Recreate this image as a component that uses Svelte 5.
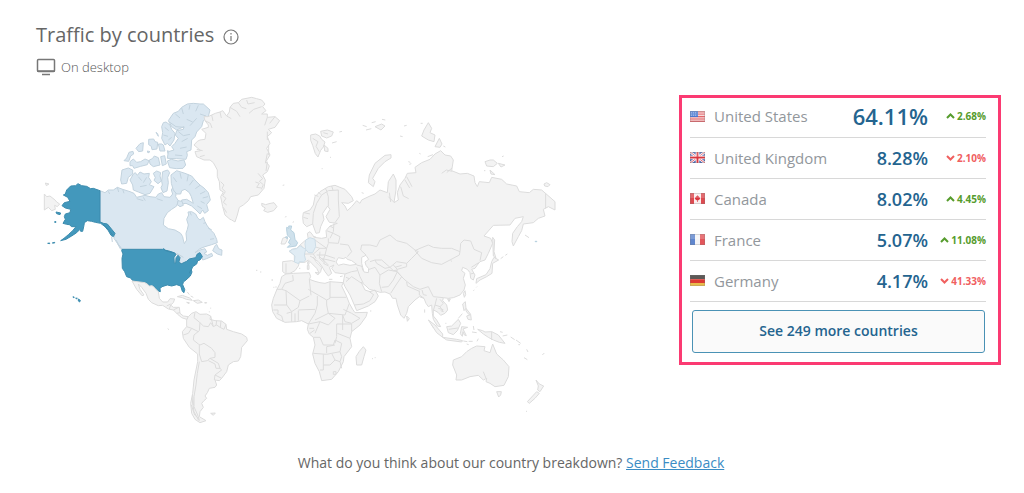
<script>
  const rows = [
    { code: 'us', name: 'United States', share: '64.11%', change: '2.68%', up: true },
    { code: 'gb', name: 'United Kingdom', share: '8.28%', change: '2.10%', up: false },
    { code: 'ca', name: 'Canada', share: '8.02%', change: '4.45%', up: true },
    { code: 'fr', name: 'France', share: '5.07%', change: '11.08%', up: true },
    { code: 'de', name: 'Germany', share: '4.17%', change: '41.33%', up: false }
  ];

  // Each region is drawn at three times the map's scale from its own origin.
  const regions = [
    { x: 30, y: 90, tone: 'light', shapes: [
      'M276 240L295 234 308 240 308 252 295 262 290 280 275 282 272 270Z',
      'M310 252L316 248 322 256 330 246 342 252 358 250 356 262 364 275 358 284 372 290 360 310 345 314 325 306 310 300 308 285 300 270Z',
      'M370 250l10-7 12 5-2 10 4 15-10 8-12-10 4-8zM398 245l15-5 6 8-6 14 2 16-4 25-12 5-6-15 4-8-2-12z',
      'M318 175l12-14 10-3-2 25-12 2z',
      'M282 212l8-8 7-17 12-3 2 8-9 6-6 16z',
      'M300 215l10-8 10 10 12-2 13-8 12 5-5 12-20 5-20 6-4-8-8 0z',
      'M356 148l15-1 4 8 8 2-2 20-15 2-2-10-8-5z M385 162l10 0 5 3 5 18-15 0z M378 127l5 4 2 8z M352 183l8 2-6 4z M412 182l10 4-8 5z',
      'M358 210l9-4 6-8 12 5 5 22-20 5-10-8z M392 200l12-3 5 25-12 5z',
      'M412 213l12-5 20 5 18-3 5 15-8 10-20 1-20-3z',
      'M395 110L400 98 408 96 420 105 425 118 435 130 432 150 420 168 412 160 405 165 395 145 398 128Z',
      'M415 92L430 70 445 64 455 52 472 42 490 40 510 42 520 42 540 60 535 80 520 92 515 110 500 126 495 140 485 150 483 180 470 185 472 196 468 208 440 206 412 205 415 185 432 180 425 170 435 160 445 145 436 135 440 122 460 118 462 110 440 120 425 110Z'
    ], lines: ['M436 72l14 12M455 54l5 18M480 45l-3 14M505 46l-8 18M470 88l18 8M500 85l-20 22M528 78l-18-6M418 96l20 14 25 2M445 125l15 12 20-4M455 155l18-10M450 175l20-4M404 112l12 10M400 135l14 4M415 150l10-8M325 260l10 12M350 262l-10 16M330 290l20-4M435 195l22 2'] },
    { x: 30, y: 190, tone: 'light', shapes: [
      'M210 96V2L225 8 235 0 250 0 262-8 278-2 300 5 312 10 320 22 345 16 360 20 378 22 385 12 395 8 402 20 420 22 428 12 424 0 430-10 440 0 437 20 445 32 440 48 425 58 412 68 402 85 400 105 415 116 435 120 452 130 458 140 460 150 463 161 470 150 468 130 472 118 475 105 470 88 476 75 474 66 485 65 497 72 503 84 510 90 520 82 525 95 532 108 542 120 552 130 560 148 562 158 545 164 525 170 510 176 495 188 510 180 525 176 530 186 522 190 532 196 545 190 548 198 530 206 518 210 515 195 508 188 502 192 497 203 478 207 470 214 453 222 449 214 450 200 438 192 420 184 404 180 398 178 276 178 262 160 252 145 255 130 235 105 220 100Z',
      'M423-45L440-58 465-50 485-42 495-30 510-15 522-6 535 8 541 30 530 44 535 62 524 70 518 60 510 72 498 60 485 48 468 40 455 42 455 30 470 28 480 34 490 40 484 20 478 8 465-2 455 2 452 12 440 12 430 0 424-20Z',
      'M548 182L556 166 560 163 566 176 576 180 575 196 562 192Z',
      'M444 32l12 2 4 12-10 4-8-6z'
    ], lines: ['M245 140l2 16M258 150l8 14 12 16M262 160l10 18M235 4l4 8M262-8l4 14M278-2l4 12M340 22l6 10M480 66l4 10M520 100l8-2M535 115l10 4M552 146l-12 2M430-38l10 14M450-52l4 18M475-46l-4 20M490-30l-12 16M510-14l-14 10M526 4l-16 8M534 20l-16 4M524 40l-12-6M516 56l-14-8M380 26l18 6M320 26l20 6M440 190l20 12'] },
    { x: 30, y: 190, tone: 'strong', shapes: [
      'M276 178H398L402 176 404 180 420 184 432 188 438 193 432 203 433 220 437 219 438 203 444 196 450 203 447 215 453 222 470 214 478 207 497 203 502 192 510 188 517 200 510 210 503 212 500 222 488 230 484 240 486 246 481 258 468 270 460 276 458 284 464 298 462 308 457 304 452 288 440 284 425 288 412 285 396 290 390 296 391 305 380 302 372 288 362 290 352 279 330 276 308 272 302 264 290 260 284 245 277 235 276 205 279 192 275 182Z',
      'M210 96V2L190-5 182-4 170-11 155-13 144-19 137-13 122-12 110 0 106 12 100 15 113 22 120 34 103 38 96 47 106 54 122 58 120 68 106 72 103 80 106 88 99 100 110 103 118 104 125 110 138 110 128 122 115 134 102 145 92 152 108 148 125 138 140 128 150 118 152 124 158 124 162 106 163 98 172 92 185 94 196 97 212 100 225 110 235 122 243 136 250 140 255 130 245 118 232 102 220 100Z',
      'M78 66l14 3-2 5-10-3zM74 95h4v2h-4zM53 160l6-1v2zM67 159l7-2v2z',
      'M129 320l4 2-3 1zM137 324l5 1-2 2zM145 327l6 4-2 5-4-3z'
    ], lines: ['M404 181l16 5 16 4M220 103l16 16 12 16M482 240l-4 10'] },
    { x: 30, y: 190, tone: 'plain', shapes: ['M43 12L50 20 60 18 75 30 80 36 89 42 82 50 74 46 76 58 65 62 55 52 43 60Z', 'M46-21l11 3-8 5z'], lines: [] },
    { x: 180, y: 90, tone: 'plain', shapes: [
      'M42 165L52 154 60 150 75 148 78 130 65 118 85 112 85 105 75 92 72 80 84 80 95 75 106 70 120 66 128 62 140 78 148 66 150 52 160 40 175 38 185 28 215 22 230 26 245 30 255 42 248 50 258 62 245 72 262 72 262 82 285 80 299 92 285 112 265 118 275 128 262 140 270 160 260 175 270 195 258 215 268 228 262 245 248 255 256 270 252 295 235 315 212 320 205 332 190 345 178 352 172 375 165 396 155 390 150 388 135 375 128 350 122 320 130 306 120 300 118 275 112 260 112 240 100 218 90 210 72 210 50 200 45 185 62 182Z',
      'M245 340l12 4 10-3 15-3 9 12-10 12-18 5-12-5 5-8-10-6z',
      'M392 135l15-3 12 6 6 10 10 8-5 15-8 10-8 20-8-10-8-25-6-15zM422 124l20-4 18 6-5 12-15 6-15-6zM432 165l12 10 0 10-10-2z',
      'M478 126l8-2M456 159l14-4M450 201l3 2M425 236h3M308 286l5-1M316 380h3M338 397l4-2'
    ], lines: ['M75 92l16 8 5 14M95 75l4 18M120 66l4 18M140 78l14 8M150 52l20 12 10 16M175 38l10 14 14 4M200 30l4 12 20-4M245 50l-24 8-14 12M262 82l-8 24M285 80l-16 20M262 125v25M266 165v30M262 190l-6 30M262 215l-4 28M234 250l14 16-10 8 12 10-6 14M226 276l12 4-8 12 14 2M122 275l10 10-6 10 10 10-8 12 10 8-8 12 10 8M130 352l10 16M50 178l18 4M60 200l14-4M398 145l16 10-6 14 10 16M430 128l14 4'] },
    { x: 120, y: 270, tone: 'plain', shapes: [
      'M36 33L75 38 88 48 97 47 115 65 118 85 128 96 143 96 150 86 164 87 160 98 152 105 160 112 178 112 180 130 190 138 205 140 200 148 185 143 172 132 160 120 145 117 128 106 115 107 95 98 85 88 78 70 65 52 55 42 60 58 72 75 66 77 50 58Z',
      'M172 80l15-4 22 8 8 7-18-3-12-5zM220 92l15-2 12 7-15 3zM200 97l8 1-1 3zM254 98h6v1h-6z',
      'M195 58l4 4M202 66l6 8M212 78l8 4M143 176l4 3M272 113v3M268 124v3M408 1h4M420 6h4',
      'M205 140L215 130 228 125 240 133 260 132 272 138 270 148 285 152 305 153 318 163 320 178 340 185 365 192 380 202 382 212 365 232 362 260 355 273 340 275 325 285 320 305 305 325 298 332 285 330 290 345 285 352 268 355 262 368 255 378 260 385 252 392 245 400 250 412 240 425 238 440 258 452 240 458 225 448 215 430 212 400 218 370 222 330 228 300 233 275 233 252 208 232 190 205 187 185 200 170 200 150Z',
      'M272 430l14-1-6 7z'
    ], lines: ['M140 108l12-6M152 105l-4 12M160 120l16-8M170 130l10-2M318 163L312 178 300 172 290 165 280 170 272 158 265 170 250 168 240 158 238 182 222 195 220 210 235 222 240 225 252 220 275 235 285 248 285 262 270 265 262 272 245 275 238 252V225M270 265L295 280 300 295 288 295 285 282 265 272M300 295L305 300 285 315 283 330M285 315L305 325M238 275L232 310 228 345 222 380 222 410 235 440 238 452M190 195L205 190 215 175 200 170M215 175L235 185M225 128L222 143 240 158M272 138L280 170M290 152L288 166M303 153L301 171M216 385l6 40 14 26M214 405l10 30 12 10M218 375l2 30'] },
    { x: 260, y: 180, tone: 'plain', shapes: [
      'M128 112L130 98 150 90 160 75 165 50 180 35 205 20 225 16 240 22 255 28 275 50 280 62 265 70 245 68 255 78 262 92 275 80 290 62 300 70 305 60 330 48 345 42 360 30 382 38 385 5 400-18 408 0 408 30 402 68 415 60 412 38 420 15 435-5 442-20 468-22 465-38 485-52 510-62 525-78 542-88 555-75 572-72 580-60 575-28 600-18 622-20 642-12 645 8 652 20 658 5 688 8 695-8 725-2 740 12 770 18 778 35 808 38 820 28 845 30 885 65 885 90 865 80 850 88 855 108 835 115 820 128 790 132 785 152 775 170 760 198 756 185 758 160 772 140 785 125 790 110 765 115 750 135 700 136 672 168 692 175 698 190 685 220 675 240 660 245 652 255 645 265 635 268 645 285 640 300 632 295 630 278 622 268 608 262 605 272 615 280 610 295 616 315 612 330 600 345 580 353 565 355 550 353 548 362 560 375 563 390 555 400 542 406 535 398 525 392 520 390 520 408 530 420 542 440 532 438 520 418 517 400 515 375 505 380 498 370 492 355 478 350 465 360 445 380 440 400 432 415 422 405 412 375 408 355 398 355 390 342 375 336 360 337 345 332 328 328 318 318 303 306 315 330 330 335 345 330 355 348 345 365 325 378 290 392 283 375 270 345 255 320 250 308 252 295 255 282 240 280 225 278 215 265 222 255 208 262 215 280 205 288 195 275 185 258 175 245 165 238 160 232 168 245 185 262 182 275 178 280 170 265 155 250 145 240 135 247 118 247 115 258 105 272 90 280 75 280 68 275 68 245 95 242 103 245 103 225 88 215 95 208 110 205 120 195 135 182 145 178 142 160 150 155 158 165 162 172 185 175 200 172 198 152 210 138 232 130 208 127 198 110 210 88 203 78 188 100 192 118 182 140 178 158 168 160 158 132 140 140 130 130Z',
      'M68 175L80 170 82 180 75 192 63 192Z',
      'M143 245h4v8h-4zM142 256h5v12h-5zM165 277l12 2-3 6zM207 298h10M240 290l8-2M117 265h4M160 170l6 0-3 5M34 300h4M78 110l-2 2',
      'M393-76L375-74 345-50 328-15 325 8 340 20 345 5 338-5 355-35 375-55 393-66Z',
      'M485-132L492-150 505-172 515-155 510-142 525-135 522-115 505-120ZM525-100L538-125 546-108 540-98ZM345-160l20-8 10 6-12 12zM318-150l16-4M308-164l12 4M335-172l12-3M432-162l8-2M366-182l10 2M420-132l8 2M482-170h6M550-102l6 3M305 38l6 2M445-55l6 2M448-47l6-2M478-80l4 2M503-70l16-6',
      'M675-55L690-60 700-60 712-50 700-40 680-42ZM715-50l20 5-12 6zM690-30l15 14-12-2zM726-70l5-2M672-28h4M852 12l8-4 10 6-6 6-10-2z',
      'M698 172L704 180 702 215 708 235 700 228ZM702 232L716 240 698 250 696 280 680 290 660 300 648 310 650 296 678 284 690 266 695 245ZM722 236l8-6M736 226l6-4M795 165l12 8M640 332l3-2M649 322l2-2',
      'M563 357l8 0-4 8zM610 340l5-8 2 12-4 8zM440 408l8 8-6 8zM608 372L616 365 618 385 612 392ZM618 385l14 18-6 0-8-10zM620 408l12-4 2 16-10-2zM595 415l12-14M494 388v10M556 430h3',
      'M505 420L525 435 548 462 548 472 530 458ZM548 472L590 478 608 482 605 486 560 480ZM610 483l12 2M626 484l12 0M620 492l6 2M515 436l6 8M560 440L575 438 595 418 602 430 592 452 580 464 565 458ZM605 440l18 2-14 5 10 20-6-2-4-10-2 14-6-8zM640 438l2 12M636 456l14 2M655 476l-4 8',
      'M653 448L668 452 675 456 695 455 715 465 735 490 718 487 700 480 685 472 670 462ZM728 468l14-3M720 455l8 2M752 471l12 8M768 480l14 10M775 494h5M800 508l4 8M792 533l10 6M847 525l6-6M798 694h3',
      'M580 540L605 530 620 515 635 505 650 498 675 500 672 512 690 518 698 492 710 522 730 540 747 560 745 590 732 616 705 620 690 610 678 605 680 595 670 600 655 586 630 590 605 600 588 600 590 585 578 555ZM710 635l14 0-2 10-6 6z',
      'M828 600L838 612 851 618 840 635 833 630 835 618ZM830 635L838 640 825 655 808 670 802 665Z'
    ], lines: ['M158 132L160 100 170 70 185 45 205 32 235 30M205 78L205 50 200 35M235 30L235 60 238 110 225 128M163 45l12 4M175 36l8 8M195 24l6 10M215 18l4 12M132 98l18 4M130 112l14 4',
      'M210 138L222 145M200 152L220 160M222 130L220 155 210 175M220 160L240 170 235 190 205 188 205 175M205 190L200 205 180 205 163 200M240 192L265 195 275 215 262 230M200 205L195 225 225 235M180 205L160 222 135 222M135 225L130 205 122 195M160 222L168 235M170 225L195 225 190 240 205 255M205 240L225 245M180 215L178 235 195 250M78 250V278M165 180L200 205M176 228l18 16M186 236l20 4M190 250l16 8M150 228l14 8',
      'M318 225L302 210 305 195 330 195 350 200 360 180 390 165 410 182 440 190 465 210 475 215 455 235 440 250 410 245 390 262 365 240 345 240 330 245M345 240L350 250 375 265 390 262M440 250L440 260 412 268 400 255M390 262L400 272 412 270M405 262l20-6',
      'M465 212L480 205 505 195 520 202 545 205 575 205 600 215 598 225 570 240 545 253 515 248 485 235ZM600 215L602 190 612 180 632 183 642 208 665 218 660 242M634 262l22-14M632 282l10-3',
      'M412 268L410 275 435 300 460 320 480 328 505 320 510 330 520 350 550 353M440 306L442 318 478 334M478 332L478 345 492 355M486 330l4 14 10 2M425 290L408 315 392 340M412 275L425 290M360 285L385 270 412 275M365 335L358 310 360 285M400 300L385 320 365 322M412 275L400 300M322 270L345 262 360 285M290 262L300 290 310 310M255 282L275 275 292 272M258 305L275 290 305 310M258 292l10 4M283 375L310 372 330 362 340 345M328 335l14 10M290 255L318 262M305 258l4 14',
      'M530 355L525 375 540 380 550 370 540 358M525 375L520 392M540 380L550 395 542 392M535 385l15 4M857 40V85M695 455V480M388 38l4 28M422 20l8 28 16 8M435 0l14 24M440-10l16 30M385 50l16 16M545-20l14-10 18 4M560-22l16-14M566 448l28-4M572 242l4 2M670 575l8 20'] },
    { x: 260, y: 250, tone: 'plain', shapes: [
      'M65 80L78 72 100 70 148 68 152 80 148 88 165 94 180 98 195 100 210 95 250 98 245 108 258 135 268 160 278 178 285 188 322 187 318 200 300 225 275 245 270 265 275 290 252 320 250 335 235 365 215 388 185 392 178 365 165 340 158 312 165 285 160 262 148 252 142 238 145 222 125 212 110 215 75 217 50 205 38 185 35 165 40 145 50 120 60 100Z',
      'M288 320L298 304 310 290 318 300 312 320 305 345 290 345ZM336 326h3M344 323h3M330 183h4M36 90h3M46 111h4M40 112h3'
    ], lines: ['M78 122L65 118H50M78 122L80 165H42M65 118L75 100 100 92 98 75M78 122L120 152 148 138M148 88L153 136M145 118L200 150 210 145V95M210 142H258M200 150V165L205 190M172 138V165L165 190M120 152L115 172 95 185 80 165M115 180L165 178M115 182V212M165 190L145 222M165 210L205 190 225 205 205 225 180 215 165 250M205 190L255 195 268 160M250 178L275 190 300 205 275 220 255 215 248 195V240M230 222H275V245M230 222V260L225 280M232 250L270 265M160 262L180 262 190 285H220L225 270 245 280M160 310L200 313 215 310M190 313V360H180M190 345L210 345 225 330 215 310 240 305 245 320 240 335 225 330M225 285L200 290V310M240 335L245 355M220 365h8v8h-8zM245 280L240 305M105 190v25M95 185v30M50 190L65 198 70 216M40 180l14 0 0 10M145 222L180 215M148 235h14M150 250l14-10M80 190l14-4'] },
    { x: 260, y: 180, tone: 'sea', shapes: ['M228 246L235 233 250 236 258 232 262 238 275 242 290 253 270 256 250 252 235 256Z', 'M305 232L318 226 326 238 315 246 318 256 326 266 325 278 312 276 308 262 305 250Z'], lines: [] },
    { x: 260, y: 180, tone: 'pale', shapes: [
      'M88 213L98 208 110 206 120 197 137 208 133 225 137 240 130 246 118 245 116 251 103 246 105 228Z',
      'M137 180L150 173 165 178 167 200 158 218 145 218 137 208 135 192Z'
    ], lines: [] },
    { x: 260, y: 180, tone: 'mid', shapes: ['M80 142L87 145 86 138 95 138 92 150 102 158 105 178 113 188 108 198 82 202 92 192 85 188 92 175 82 165 80 150ZM76 172l6-2 1 6z', 'M825 184h6v1h-6z'], lines: [] }
  ];
</script>

<main>
  <header>
    <h1>
      Traffic by countries
      <svg class="info" viewBox="0 0 16 16" role="img" aria-label="Information">
        <circle cx="8" cy="8" r="7" />
        <path d="M8 7v5" /><path d="M8 4v1.6" />
      </svg>
    </h1>
    <p class="device">
      <svg viewBox="0 0 20 18" aria-hidden="true">
        <rect x="1.5" y="1.5" width="17" height="12" rx="1" />
        <path d="M1 13h18M6 16.5h8" />
      </svg>
      On desktop
    </p>
  </header>

  <section class="content">
    <svg class="map" viewBox="36 90 528 340" role="img" aria-label="World map of traffic share">
      {#each regions as r}
        <g transform="translate({r.x} {r.y}) scale(0.33333)" class={r.tone}>
          {#each r.shapes as d}<path {d} />{/each}
          {#each r.lines as d}<path class="line" {d} />{/each}
        </g>
      {/each}
    </svg>

    <aside class="panel">
      <table>
        <tbody>
          {#each rows as row, i}
            <tr>
              <td class="flag">
                <svg viewBox="0 0 15 11" aria-hidden="true">
                  {#if row.code === 'us'}
                    <rect width="15" height="11" fill="#f4d5d5" />
                    <path d="M0 .8h15M0 3.2h15M0 5.6h15M0 8h15M0 10.4h15" stroke="#e3666b" stroke-width="1.2" />
                    <rect width="8" height="6" fill="#4b78cf" />
                    <path d="M1 1.5h6M1 3h6M1 4.5h6" stroke="#a9c3f0" stroke-width=".6" stroke-dasharray="1 1" />
                  {:else if row.code === 'gb'}
                    <rect width="15" height="11" fill="#4461ae" />
                    <path d="M0 0l15 11M15 0L0 11" stroke="#fff" stroke-width="2.4" />
                    <path d="M0 0l15 11M15 0L0 11" stroke="#dd5560" stroke-width=".9" />
                    <path d="M7.5 0v11M0 5.5h15" stroke="#fff" stroke-width="3.6" />
                    <path d="M7.5 0v11M0 5.5h15" stroke="#d9363f" stroke-width="1.9" />
                  {:else if row.code === 'ca'}
                    <rect width="15" height="11" fill="#fbeeee" />
                    <path d="M0 0h4v11H0zM11 0h4v11h-4z" fill="#dd4a50" />
                    <path d="M7.5 2l.8 1.4.8-.3-.2 1.5 1.3-.4-.3 1 .5.5-2 1.6H7.8V9h-.6V7.3H6.6L4.6 5.7l.5-.5-.3-1 1.3.4-.2-1.5.8.3z" fill="#d9363f" />
                  {:else if row.code === 'fr'}
                    <rect width="15" height="11" fill="#f4f4f6" />
                    <rect width="5" height="11" fill="#5f86cd" />
                    <rect x="10" width="5" height="11" fill="#e3565b" />
                  {:else}
                    <rect width="15" height="4" fill="#3a3532" />
                    <rect y="4" width="15" height="4" fill="#dc3a32" />
                    <rect y="8" width="15" height="3" fill="#e8bc4c" />
                  {/if}
                  <rect width="15" height="5" fill="#fff" opacity=".18" />
                  <rect x=".5" y=".5" width="14" height="10" fill="none" stroke="#777" opacity=".25" />
                </svg>
              </td>
              <th scope="row">{row.name}</th>
              <td class="share" class:top={i === 0}>{row.share}</td>
              <td class="change" class:up={row.up}>
                <span>
                  <svg viewBox="0 0 9 6" role="img" aria-label={row.up ? 'Up' : 'Down'}>
                    <path d={row.up ? 'M1 5l3.5-3.5L8 5' : 'M1 1l3.5 3.5L8 1'} />
                  </svg>{row.change}
                </span>
              </td>
            </tr>
          {/each}
        </tbody>
      </table>
      <button type="button">See 249 more countries</button>
    </aside>
  </section>

  <footer>
    What do you think about our country breakdown? <a href="#feedback">Send Feedback</a>
  </footer>
</main>

<style>
  :global(body) {
    margin: 0;
    background: #fff;
  }
  main {
    padding: 20px 23px 16px 36px;
    font-family: "Open Sans", sans-serif;
    color: #666;
  }
  h1 {
    display: flex;
    align-items: center;
    gap: 9px;
    margin: 0;
    font-size: 20px;
    line-height: 30px;
    font-weight: 400;
  }
  .info {
    width: 16px;
    height: 16px;
    margin-top: 3px;
    fill: none;
    stroke: #777;
    stroke-width: 1.2;
  }
  .device {
    display: flex;
    align-items: center;
    gap: 5px;
    margin: 7px 0 0;
    font-size: 13px;
    line-height: 20px;
    font-weight: 300;
    color: #555;
  }
  .device svg {
    width: 20px;
    height: 18px;
    fill: none;
    stroke: #777;
    stroke-width: 1.5;
  }
  .content {
    display: grid;
    grid-template-columns: minmax(0, 1fr) 322px;
    align-items: start;
    margin-top: 13px;
  }
  .map {
    width: 100%;
    max-width: 528px;
    display: block;
  }
  .map path {
    stroke-width: 3;
    stroke-linejoin: round;
  }
  .plain {
    fill: #f3f3f3;
    stroke: #dcdcdc;
  }
  .light {
    fill: #dae7f1;
    stroke: #c3d3de;
  }
  .pale {
    fill: #e0ecf4;
    stroke: #cddde7;
  }
  .mid {
    fill: #cfe1ec;
    stroke: #b8d1df;
  }
  .strong {
    fill: #4398bc;
    stroke: #3c8cae;
  }
  .sea {
    fill: #fff;
    stroke: #dcdcdc;
  }
  .map .line {
    fill: none;
  }
  .panel {
    box-sizing: border-box;
    margin-top: 5px;
    padding: 0 12px 9px 8px;
    border: 3px solid #fb3a72;
  }
  table {
    width: 100%;
    margin-top: -2px;
    border-collapse: collapse;
  }
  tr {
    height: 41px;
    border-bottom: 1px solid #d8d8d8;
  }
  td,
  th {
    padding: 0;
    line-height: 24px;
    vertical-align: middle;
  }
  .flag {
    width: 24px;
  }
  .flag svg {
    display: block;
    width: 15px;
    height: 11px;
  }
  th {
    font-size: 15px;
    font-weight: 400;
    text-align: left;
    color: #92979c;
  }
  .share {
    font-size: 18px;
    font-weight: 600;
    text-align: right;
    color: #24648f;
  }
  .share.top {
    font-size: 22px;
  }
  .change {
    width: 58px;
    font-size: 10px;
    font-weight: 700;
    color: #f0605f;
  }
  .change.up {
    color: #569c2d;
  }
  .change span {
    display: flex;
    align-items: center;
    justify-content: flex-end;
    gap: 2px;
  }
  .change svg {
    width: 9px;
    height: 6px;
    fill: none;
    stroke: currentColor;
    stroke-width: 2;
  }
  button {
    display: block;
    width: calc(100% - 3px);
    height: 43px;
    margin: 8px 1px 0 2px;
    border: 1px solid #4a92b5;
    border-radius: 3px;
    background: #fafafa;
    font: 600 14px/20px "Open Sans", sans-serif;
    color: #24648f;
  }
  footer {
    margin-top: 23px;
    padding-right: 15px;
    font-size: 14px;
    line-height: 20px;
    text-align: center;
    color: #666;
  }
  a {
    color: #3a8cc4;
  }
</style>
